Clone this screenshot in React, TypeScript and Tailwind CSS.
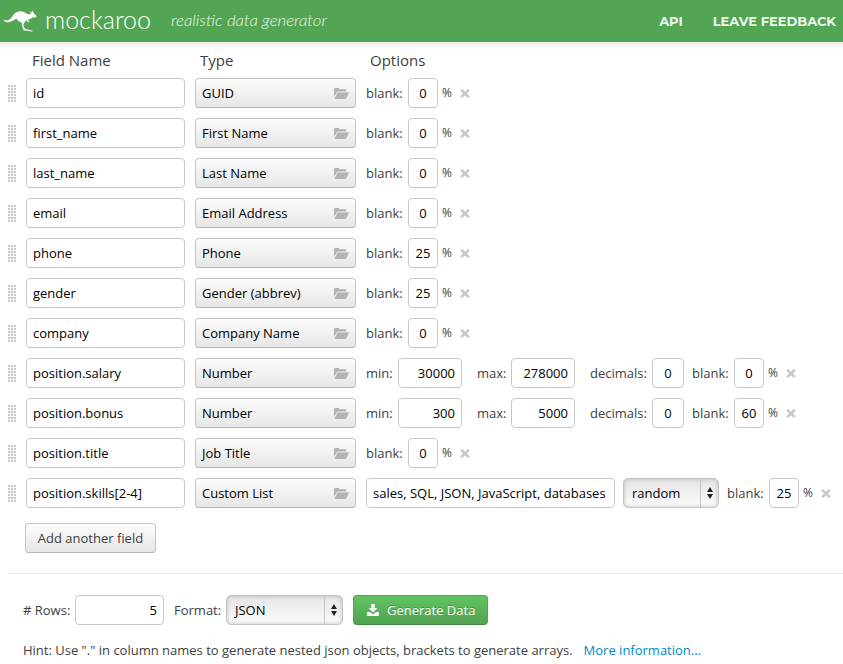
import React from "react";

const FONT = "font-['Open_Sans','Noto_Sans',sans-serif]";

function Kangaroo() {
  return (
    <svg className="mt-[9px] ml-[3px] h-[23px] w-[35px] shrink-0" viewBox="3 9 35 23" fill="#fff">
      <path d="M3 19.3C6 21.6 9 20.5 11.5 17.5C14 13.2 17 11.2 21 11.3C24.4 11.4 26.5 14.2 29 14.5L31 13.7L29.8 10.8L32.2 13L32 10L34 13.6L36.6 16.2C36.4 17.6 34 17.5 32.2 17.2C31.2 19.3 29 19.5 27.8 19.4L29.6 22.5L27.5 21.7L26 19.8C25.8 21.6 24.2 22.4 23.3 24.2C23.5 26 24.3 28.2 25.6 29L32.5 30.7L32.2 31.4L23.7 30.2C22.8 27.6 21.5 25 21.8 22.4C19.5 22 17.7 20.6 16.2 18.5C13.4 20.9 9.5 22.9 6 21.9C4.5 21.4 3.5 20.4 3 19.3Z" />
    </svg>
  );
}

function Handle() {
  const cells: React.ReactNode[] = [];
  for (let y = 0; y < 6; y++)
    for (let x = 0; x < 3; x++)
      cells.push(<rect key={`${x}-${y}`} x={x * 3} y={y * 3} width="2" height="2" />);
  return (
    <svg className="ml-2 h-[17px] w-2 shrink-0" viewBox="0 0 8 17" fill="#c8c8c8" shapeRendering="crispEdges">
      {cells}
    </svg>
  );
}

function Folder() {
  return (
    <svg className="h-[11px] w-[15px]" viewBox="0 0 15 11" fill="#b3b3b3">
      <path d="M0 9.2V1.2Q0 0 1.2 0H4.2Q5.2 0 5.3 1.3H11Q12.2 1.3 12.3 3.5H4.2Q3.2 3.5 2.6 4.5Z" />
      <path d="M4.3 4.4H15L12.2 10.2Q11.8 11 10.9 11H.5L3.2 5.2Q3.5 4.4 4.3 4.4Z" />
    </svg>
  );
}

function Remove() {
  return (
    <svg className="h-[9px] w-[10px] shrink-0" viewBox="0 0 10 9" stroke="#c9c9c9" strokeWidth="2.6">
      <path d="M1.2 .8L8.8 8.2M8.8 .8L1.2 8.2" />
    </svg>
  );
}

const base = "flex h-[30px] shrink-0 items-center rounded-[4px] border border-[#c7c7c7] bg-white text-black whitespace-nowrap";

function Num({ w, children }: { w: string; children: React.ReactNode }) {
  return <div className={`${base} ${w} justify-end pr-[6px]`}>{children}</div>;
}

function Small({ w = "w-[30px]", children }: { w?: string; children: React.ReactNode }) {
  return <div className={`${base} ${w} justify-center`}>{children}</div>;
}

function Label({ w, children }: { w: string; children: React.ReactNode }) {
  return <span className={`${w} shrink-0 whitespace-nowrap`}>{children}</span>;
}

function Blank({ value }: { value: number }) {
  return (
    <>
      <Label w="w-[42px]">blank:</Label>
      <Small>{value}</Small>
      <span className="ml-1 w-[18px] shrink-0 text-[12px]">%</span>
      <Remove />
    </>
  );
}

function Select({ w, children }: { w: string; children: React.ReactNode }) {
  return (
    <div className={`flex h-[30px] shrink-0 items-center rounded-[5px] border border-[#c4c4c4] bg-linear-to-b from-[#e5e5e5] to-[#fbfbfb] text-black shadow-[inset_0_0_4px_rgba(0,0,0,0.22)] ${w}`}>
      <span className="grow pl-2">{children}</span>
      <span className="flex h-full w-[18px] items-center justify-center border-l border-[#c4c4c4]">
        <svg className="h-3 w-[6px]" viewBox="0 0 6 12" fill="#222">
          <path d="M3 0L6 5H0ZM0 7H6L3 12Z" />
        </svg>
      </span>
    </div>
  );
}

type Row = { name: string; type: string; blank: number; range?: [number, number]; list?: string };

const rows: Row[] = [
  { name: "id", type: "GUID", blank: 0 },
  { name: "first_name", type: "First Name", blank: 0 },
  { name: "last_name", type: "Last Name", blank: 0 },
  { name: "email", type: "Email Address", blank: 0 },
  { name: "phone", type: "Phone", blank: 25 },
  { name: "gender", type: "Gender (abbrev)", blank: 25 },
  { name: "company", type: "Company Name", blank: 0 },
  { name: "position.salary", type: "Number", blank: 0, range: [30000, 278000] },
  { name: "position.bonus", type: "Number", blank: 60, range: [300, 5000] },
  { name: "position.title", type: "Job Title", blank: 0 },
  { name: "position.skills[2-4]", type: "Custom List", blank: 25, list: "sales, SQL, JSON, JavaScript, databases" },
];

function FieldRow({ row }: { row: Row }) {
  return (
    <div className="flex h-[30px] items-center">
      <Handle />
      <div className={`${base} ml-[10px] w-[159px] pl-[6px]`}>{row.name}</div>
      <button className="ml-[10px] flex h-[30px] w-[161px] shrink-0 items-center justify-between rounded-[4px] border border-[#c4c4c4] border-b-[#b3b3b3] bg-linear-to-b from-[#fcfcfc] to-[#e6e6e6] pr-[6px] pl-[6px] text-black">
        {row.type}
        <Folder />
      </button>
      <div className="ml-[10px] flex items-center">
        {row.range && (
          <>
            <Label w="w-8">min:</Label>
            <Num w="w-16">{row.range[0]}</Num>
            <Label w="ml-[15px] w-[34px]">max:</Label>
            <Num w="w-16">{row.range[1]}</Num>
            <Label w="ml-[15px] w-[62px]">decimals:</Label>
            <Small w="w-8 mr-2">0</Small>
          </>
        )}
        {row.list && (
          <>
            <div className={`${base} mr-2 w-[249px] pl-[6px]`}>{row.list}</div>
            <Select w="mr-2 w-24">random</Select>
          </>
        )}
        <Blank value={row.blank} />
      </div>
    </div>
  );
}

export default function App() {
  return (
    <div className={`h-[664px] w-[843px] overflow-hidden bg-white text-[13px] leading-5 text-[#404040] ${FONT}`}>
      <header className="flex h-[42px] bg-[#52a552] text-white">
        <Kangaroo />
        <svg className="h-[42px] w-[300px] shrink-0" viewBox="38 0 300 42" fill="#fff">
          <text x="45" y="29" fontFamily="Lato, sans-serif" fontWeight="300" fontSize="26" textLength="106" lengthAdjust="spacingAndGlyphs">mockaroo</text>
          <text x="171" y="26" fontFamily="Lato, sans-serif" fontWeight="300" fontStyle="italic" fontSize="16" opacity="0.9" textLength="156" lengthAdjust="spacingAndGlyphs">realistic data generator</text>
        </svg>
        <nav className="ml-auto flex items-center gap-[30px] pr-[7px] font-['Montserrat','Lato','Open_Sans',sans-serif] text-[13px] font-bold whitespace-nowrap text-[#eef6ee]">
          <span>API</span>
          <span>LEAVE FEEDBACK</span>
        </nav>
      </header>
      <div className="h-[8px] bg-linear-to-b from-[#efefef] to-white" />
      <div className="flex h-[28px] pl-8 text-[15px]">
        <span className="w-[168px]">Field Name</span>
        <span className="w-[170px]">Type</span>
        <span>Options</span>
      </div>
      <main className="flex flex-col gap-[10px]">
        {rows.map((row) => (
          <FieldRow key={row.name} row={row} />
        ))}
      </main>
      <button className="mt-[15px] ml-[25px] block h-[30px] w-[131px] rounded-[4px] border border-[#c4c4c4] border-b-[#b3b3b3] bg-linear-to-b from-[#fdfdfd] to-[#e6e6e6]">
        Add another field
      </button>
      <div className="mt-5 ml-2 border-t border-[#eaeaea]" />
      <div className="mt-[21px] flex h-[30px] items-center pl-[23px]">
        <Label w="w-[52px]"># Rows:</Label>
        <Num w="w-[89px]">5</Num>
        <Label w="ml-[10px] w-[52px]">Format:</Label>
        <Select w="w-[117px]">JSON</Select>
        <button className="ml-[10px] flex h-[30px] w-[135px] items-center rounded-[4px] border border-[#51a351] border-b-[#438743] bg-linear-to-b from-[#62c462] to-[#51a351] pl-[13px] text-white [text-shadow:0_-1px_0_rgba(0,0,0,0.25)]">
          <svg className="mr-2 h-3 w-3 shrink-0" viewBox="0 0 12 12" fill="#fff">
            <path d="M4.3 0H7.7V4H10.5L6 8.5L1.5 4H4.3ZM0 8H3L6 10.4L9 8H12V12H0Z" />
          </svg>
          Generate Data
        </button>
      </div>
      <p className="mt-[15px] pl-[23px] whitespace-nowrap">
        Hint: Use "." in column names to generate nested json objects, brackets to generate arrays.
        <a className="ml-[11px] text-[#0088cc]">More information...</a>
      </p>
    </div>
  );
}
